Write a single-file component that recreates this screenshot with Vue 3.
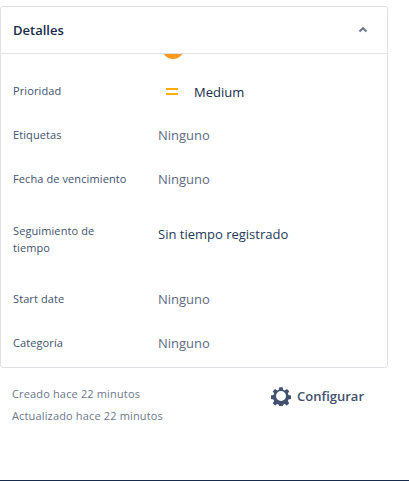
<script setup>
const rows = [
  { label: 'Etiquetas', value: 'Ninguno', muted: true },
  { label: 'Fecha de vencimiento', value: 'Ninguno', muted: true },
  { label: 'Seguimiento de tiempo', value: 'Sin tiempo registrado', tracking: true },
  { label: 'Start date', value: 'Ninguno', muted: true },
  { label: 'Categoría', value: 'Ninguno', muted: true },
]
</script>

<template>
  <div class="page">
    <section class="card">
      <header class="head">
        <h2>Detalles</h2>
        <svg class="chev" width="12" height="12" viewBox="0 0 12 12"><path d="M2.500 7.500 6 4.200l3.500 3.300" fill="none" stroke="#6b778c" stroke-width="2"/></svg>
      </header>
      <div class="body">
        <span class="blob"></span>
        <div class="row">
          <div class="label">Prioridad</div>
          <div class="value priority">
            <svg width="14" height="14" viewBox="0 0 14 14"><path d="M1 3h12v2H1zM1 8h12v2H1z" fill="#ffab00"/></svg>
            <span>Medium</span>
          </div>
        </div>
        <div v-for="r in rows" :key="r.label" class="row" :class="{ tracking: r.tracking }">
          <div class="label">{{ r.label }}</div>
          <div class="value" :class="{ muted: r.muted }">{{ r.value }}</div>
        </div>
      </div>
    </section>
    <footer class="foot">
      <div class="times">
        <div>Creado hace 22 minutos</div>
        <div>Actualizado hace 22 minutos</div>
      </div>
      <div class="config">
        <svg width="20" height="20" viewBox="0 0 24 24"><path fill="#42526e" fill-rule="evenodd" d="M10 1.500h4l.6 3 1.900.8 2.600-1.700 2.800 2.800-1.700 2.600.8 1.900 3 .6v4l-3 .6-.8 1.900 1.700 2.600-2.800 2.800-2.600-1.700-1.900.8-.6 3h-4l-.6-3-1.900-.8-2.600 1.700-2.800-2.800 1.700-2.600-.8-1.900-3-.6v-4l3-.6.8-1.900-1.700-2.600 2.800-2.800 2.600 1.700 1.900-.8zM12 6a6 6 0 1 0 0 12 6 6 0 0 0 0-12z"/></svg>
        <span>Configurar</span>
      </div>
    </footer>
  </div>
</template>

<style scoped>
.page {
  box-sizing: border-box;
  width: 409px;
  height: 481px;
  padding-top: 6px;
  background: #fff;
  border-bottom: 1px solid #172b4d;
  font-family: "Open Sans", "Noto Sans", sans-serif;
  color: #172b4d;
  overflow: hidden;
}
.card {
  box-sizing: border-box;
  width: 388px;
  height: 362px;
  border: 1px solid #dfe1e6;
  border-radius: 3px;
}
.head {
  display: flex;
  align-items: center;
  justify-content: space-between;
  height: 46px;
  padding: 0 18px 0 12px;
  border-bottom: 1px solid #dfe1e6;
}
.head h2 {
  margin: 0;
  font-size: 13px;
  font-weight: 600;
}
.chev { display: block; }
.body {
  position: relative;
  overflow: hidden;
  padding-top: 28px;
}
.blob {
  position: absolute;
  left: 161px;
  top: -17px;
  width: 22px;
  height: 22px;
  border-radius: 50%;
  background: #ff991f;
}
.row {
  display: grid;
  grid-template-columns: 145px 1fr;
  height: 44px;
  padding-left: 12px;
  font-size: 11px;
}
.label {
  color: #42526e;
  line-height: 17px;
  letter-spacing: 0.1px;
  white-space: nowrap;
}
.value {
  font-size: 13px;
  line-height: 18px;
  color: #253858;
}
.muted { color: #5e6c84; }
.priority {
  display: flex;
  align-items: center;
  gap: 15px;
  margin-top: 1px;
  padding-left: 7px;
  height: 18px;
  color: #172b4d;
}
.priority svg { display: block; }
.row.tracking {
  box-sizing: border-box;
  height: 76px;
  padding-top: 8px;
}
.tracking .label {
  width: 110px;
  white-space: normal;
}
.tracking .value { margin-top: 3px; }
.foot {
  display: flex;
  justify-content: space-between;
  padding: 15px 24px 0 12px;
}
.times {
  font-size: 11px;
  letter-spacing: 0.15px;
  color: #6b778c;
  line-height: 22px;
}
.config {
  display: flex;
  align-items: center;
  gap: 6px;
  height: 20px;
  margin-top: 3px;
  margin-right: 21px;
  font-size: 13px;
  font-weight: 600;
  color: #42526e;
}
.config svg { display: block; }
</style>
